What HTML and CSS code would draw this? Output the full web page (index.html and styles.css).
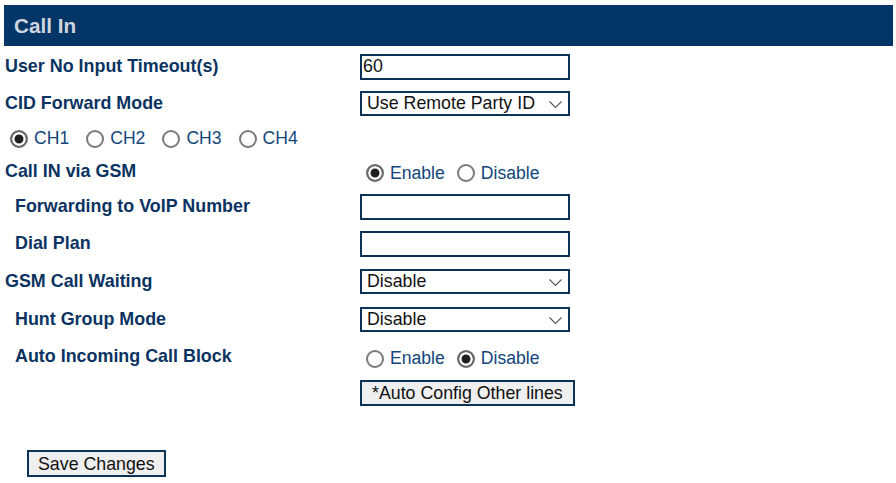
FILE: index.html
```html
<!DOCTYPE html>
<html>
<head>
<meta charset="utf-8">
<title>Call In</title>
<link rel="stylesheet" href="styles.css">
</head>
<body>
<div class="page">
  <div class="header">Call In</div>
  <div class="form">
    <div class="row r1">
      <div class="label">User No Input Timeout(s)</div>
      <div class="ctrl"><input class="text" type="text" value="60"></div>
    </div>
    <div class="row r2">
      <div class="label">CID Forward Mode</div>
      <div class="ctrl">
        <span class="sel">
          <select><option>Use Remote Party ID</option></select>
          <svg class="chev" width="13" height="7" viewBox="0 0 13 7"><path d="M0.5 0.5 L6.5 6.5 L12.5 0.5" fill="none" stroke="#555" stroke-width="1.1"/></svg>
        </span>
      </div>
    </div>
    <div class="row r3">
      <div class="channels">
        <label class="opt ch"><input type="radio" name="ch" checked><span>CH1</span></label>
        <label class="opt ch"><input type="radio" name="ch"><span>CH2</span></label>
        <label class="opt ch"><input type="radio" name="ch"><span>CH3</span></label>
        <label class="opt ch"><input type="radio" name="ch"><span>CH4</span></label>
      </div>
    </div>
    <div class="row r4">
      <div class="label">Call IN via GSM</div>
      <div class="ctrl radios">
        <label class="opt"><input type="radio" name="gsm" checked><span>Enable</span></label>
        <label class="opt"><input type="radio" name="gsm"><span>Disable</span></label>
      </div>
    </div>
    <div class="row r5">
      <div class="label sub">Forwarding to VoIP Number</div>
      <div class="ctrl"><input class="text" type="text" value=""></div>
    </div>
    <div class="row r6">
      <div class="label sub">Dial Plan</div>
      <div class="ctrl"><input class="text" type="text" value=""></div>
    </div>
    <div class="row r7">
      <div class="label">GSM Call Waiting</div>
      <div class="ctrl">
        <span class="sel">
          <select><option>Disable</option></select>
          <svg class="chev" width="13" height="7" viewBox="0 0 13 7"><path d="M0.5 0.5 L6.5 6.5 L12.5 0.5" fill="none" stroke="#555" stroke-width="1.1"/></svg>
        </span>
      </div>
    </div>
    <div class="row r8">
      <div class="label sub">Hunt Group Mode</div>
      <div class="ctrl">
        <span class="sel">
          <select><option>Disable</option></select>
          <svg class="chev" width="13" height="7" viewBox="0 0 13 7"><path d="M0.5 0.5 L6.5 6.5 L12.5 0.5" fill="none" stroke="#555" stroke-width="1.1"/></svg>
        </span>
      </div>
    </div>
    <div class="row r9">
      <div class="label sub">Auto Incoming Call Block</div>
      <div class="ctrl radios">
        <label class="opt"><input type="radio" name="blk"><span>Enable</span></label>
        <label class="opt"><input type="radio" name="blk" checked><span>Disable</span></label>
      </div>
    </div>
    <div class="row r10">
      <div class="label"></div>
      <div class="ctrl"><button class="btn" type="button">*Auto Config Other lines</button></div>
    </div>
  </div>
  <div class="save">
    <button class="btn savebtn" type="button">Save Changes</button>
  </div>
</div>
</body>
</html>
```
FILE: styles.css
```css
* { box-sizing: border-box; }
html, body { margin: 0; padding: 0; background: #ffffff; }
body {
  font-family: "Liberation Sans", Arial, sans-serif;
  color: #0a3362;
}
.page {
  padding: 5px 3px 0 4px;
  width: 896px;
}
.header {
  height: 41px;
  background: #033567;
  color: #cfd6df;
  font-weight: bold;
  font-size: 20.7px;
  padding-left: 10px;
  display: flex;
  align-items: center;
}
.form {
  padding-top: 2px;
}
.row {
  display: grid;
  grid-template-columns: 356px 1fr;
  align-items: center;
}
.r1 { height: 37px; }
.r2 { height: 36px; }
.r3 { height: 33px; display: flex; }
.r4 { height: 34px; }
.r5 { height: 37px; }
.r6 { height: 37px; }
.r7 { height: 38px; }
.r8 { height: 38px; }
.r9 { height: 37px; }
.r10 { height: 36px; }
.label {
  font-weight: bold;
  font-size: 17.9px;
  color: #0a3362;
  padding-left: 1px;
  white-space: nowrap;
}
.label.sub { padding-left: 11px; }
.ctrl { display: flex; align-items: center; }
.text {
  width: 210px;
  height: 26px;
  border: 2px solid #0b3358;
  border-radius: 0;
  padding: 0 0 0 1px;
  font-family: "Liberation Sans", Arial, sans-serif;
  font-size: 17.8px;
  color: #111;
  background: #fff;
  outline: none;
}
.sel {
  position: relative;
  display: inline-block;
  width: 210px;
  height: 25px;
}
.sel select {
  -webkit-appearance: none;
  appearance: none;
  width: 210px;
  height: 25px;
  border: 2px solid #0b3358;
  border-radius: 0;
  padding: 0 0 0 5px;
  font-family: "Liberation Sans", Arial, sans-serif;
  font-size: 17.8px;
  color: #111;
  background: #fff;
  outline: none;
}
.chev {
  position: absolute;
  right: 8px;
  top: 10px;
  pointer-events: none;
}
.channels {
  display: flex;
  align-items: center;
  padding-left: 6px;
  padding-top: 2px;
  gap: 17px;
}
.radios {
  padding-left: 6px;
  margin-top: 4px;
  gap: 12px;
}
.opt {
  display: inline-flex;
  align-items: center;
  gap: 6px;
  font-size: 17.6px;
  color: #12467a;
}
.opt input {
  -webkit-appearance: none;
  appearance: none;
  margin: 0;
  width: 18px;
  height: 18px;
  border: 2px solid #7a7a7a;
  border-radius: 50%;
  background: #fff;
}
.opt input:checked {
  border-color: #6a6a6a;
  background: #1e1e1e;
  box-shadow: inset 0 0 0 2.5px #fff;
}
.btn {
  height: 26px;
  border: 2px solid #0b3358;
  border-radius: 0;
  background: #efefef;
  color: #111;
  font-family: "Liberation Sans", Arial, sans-serif;
  font-size: 17.8px;
  padding: 0 10px;
  line-height: 20px;
}
.save {
  padding: 39px 0 0 23px;
}
.savebtn {
  height: 27px;
  padding: 0 9px;
}
```
